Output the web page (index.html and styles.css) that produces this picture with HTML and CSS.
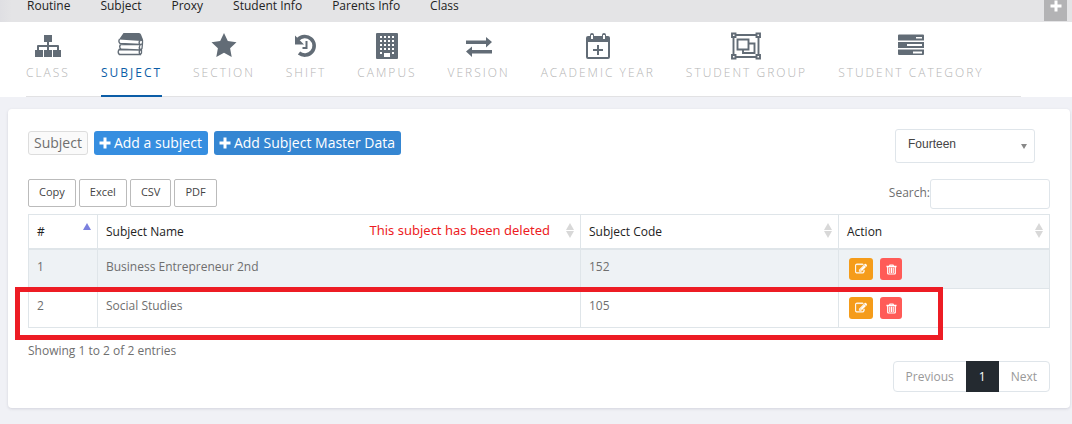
FILE: index.html
```html
<!DOCTYPE html>
<html lang="en">
<head>
<meta charset="utf-8">
<title>Subject</title>
<link rel="stylesheet" href="styles.css">
</head>
<body>
<svg class="sprite" aria-hidden="true">
  <symbol id="plus" viewBox="0 0 12 12"><path d="M4.500 .5h3v4h4v3h-4v4h-3v-4h-4v-3h4z"/></symbol>
  <symbol id="edit" viewBox="0 0 1792 1792"><path stroke="currentColor" stroke-width="60" d="M888 1184l116-116-152-152-116 116v56h96v96h56zm440-720q-16-16-33 1l-350 350q-17 17-1 33t33-1l350-350q17-17 1-33zm80 594v190q0 119-84.500 203.500t-203.500 84.500h-832q-119 0-203.500-84.500t-84.500-203.500v-832q0-119 84.500-203.500t203.500-84.500h832q63 0 117 25 15 7 18 23 3 17-9 29l-49 49q-14 14-32 8-23-6-45-6h-832q-66 0-113 47t-47 113v832q0 66 47 113t113 47h832q66 0 113-47t47-113v-126q0-13 9-22l64-64q15-15 35-7t20 29zm-96-738l288 288-672 672h-288v-288zm444 132l-92 92-288-288 92-92q28-28 68-28t68 28l152 152q28 28 28 68t-28 68z"/></symbol>
  <symbol id="trash" viewBox="0 0 12 12"><path fill-rule="evenodd" d="M4 .5h4l.8 1.500H11.500v1.500h-.7V10q0 1.500-1.300 1.500H2.500Q1.200 11.500 1.200 10V3.500H.5V2h2.700zm.9 1L4.700 2h2.600l-.2-.5zM2.500 3.500v6.300q0 .5.500.5h6q.5 0 .5-.5V3.500zM3.500 4h1.200v5.700H3.500zm1.900 0h1.200v5.700H5.400zm1.900 0h1.200v5.700H7.300z"/></symbol>
</svg>

<header class="topbar">
  <nav class="topnav">
    <a href="#">Routine</a><a href="#">Subject</a><a href="#">Proxy</a><a href="#">Student Info</a><a href="#">Parents Info</a><a href="#">Class</a>
  </nav>
  <button class="expand" type="button" aria-label="Add"><svg viewBox="0 0 12 12"><use href="#plus"/></svg></button>
</header>

<div class="tabs-area">
  <nav class="tabs">
    <a class="tab" href="#"><svg viewBox="0 0 30 28"><path d="M11 3h8v7h-3v3h9q1 0 1 1v4h2v7h-8v-7h4v-3h-8v3h3v7h-8v-7h3v-3H6v3h4v7H2v-7h2v-4q0-1 1-1h9v-3h-3z"/></svg><span>CLASS</span></a>
    <a class="tab active" href="#"><svg viewBox="0 0 30 28"><path d="M7.500 1h15.500q1.500 0 2 1.500l2 5q.5 1.500-1.500 1.500L3 7.500z"/><path class="line" d="M26.500 8v3.500l-2 1.200M26.500 11.500l-.5 5-2 1.500M25.500 17v4l-1.500 2M3.500 7q-1.500 2.500.5 4.500l20 1q-1.800-2 0-4M24 12.700L4.500 12.500q-1.800 2.500.3 4.700L24 18q-1.500-2.500 0-5M24 18l-21-.5q-1.800 2.700.3 5H24q-1.600-2.300 0-4.500"/></svg><span>SUBJECT</span></a>
    <a class="tab" href="#"><svg viewBox="0 0 30 28"><path d="M15 1l3.800 8 8.700 1.200-6.400 6 1.600 8.800-7.700-4.200L7.300 25l1.600-8.800-6.400-6L11.200 9z"/></svg><span>SECTION</span></a>
    <a class="tab" href="#"><svg viewBox="0 0 30 28"><path class="ring" d="M7 7.500A9.300 9.300 0 1 1 8 21"/><path d="M4 3.500v9h9zM14.500 9h2v8h-5v-2h3z"/></svg><span>SHIFT</span></a>
    <a class="tab" href="#"><svg viewBox="0 0 30 28"><path fill-rule="evenodd" d="M5 1h20q1 0 1 1v24q0 1-1 1H5q-1 0-1-1V2q0-1 1-1zM8 4v2h2V4zm4 0v2h2V4zm4 0v2h2V4zm4 0v2h2V4zM8 8v2h2V8zm4 0v2h2V8zm4 0v2h2V8zm4 0v2h2V8zM8 12v2h2v-2zm4 0v2h2v-2zm4 0v2h2v-2zm4 0v2h2v-2zM8 16v2h2v-2zm4 0v2h2v-2zm4 0v2h2v-2zm4 0v2h2v-2zM8 20v2h2v-2zm12 0v2h2v-2zM12 21v4h6v-4z"/></svg><span>CAMPUS</span></a>
    <a class="tab" href="#"><svg viewBox="0 0 30 28"><path d="M2 8.500h20V5l6 5-6 5.500V12H2zM28 21.500H8V25l-6-5.500 6-5V18h20z"/></svg><span>VERSION</span></a>
    <a class="tab" href="#"><svg viewBox="0 0 30 28"><path fill-rule="evenodd" d="M5 4h2V3q0-2 2-2t2 2v1h8V3q0-2 2-2t2 2v1h2q2 0 2 2v19q0 2-2 2H5q-2 0-2-2V6q0-2 2-2zm3-1v4h2V3zm12 0v4h2V3zM5 10v15h20V10zM14 13h2v4h4v2h-4v4h-2v-4h-4v-2h4z"/></svg><span>ACADEMIC YEAR</span></a>
    <a class="tab" href="#"><svg viewBox="0 0 30 28"><path class="group" d="M5 3h20M5 25h20M2.500 5v18M27.500 5v18M1 1.500h3.500V5H1zM25.500 1.500H29V5h-3.500zM1 23h3.500v3.500H1zM25.500 23H29v3.500h-3.500zM6.500 7.500h11v10h-11zM18 11.500h5.500v9.500H12v-3"/></svg><span>STUDENT GROUP</span></a>
    <a class="tab" href="#"><svg viewBox="0 0 30 28"><path fill-rule="evenodd" d="M3 2.500h24q1 0 1 1V8.500H2V3.500q0-1 1-1zM20 5v1.500h6V5zM2 10h26v6H2zM11 12v2h15v-2zM2 17.500h26V22q0 1-1 1H3q-1 0-1-1zM17 19.500v2h9v-2z"/></svg><span>STUDENT CATEGORY</span></a>
  </nav>
</div>

<main class="card">
  <div class="toolbar">
    <div class="actions">
      <span class="tag">Subject</span>
      <button class="btn add" type="button"><svg viewBox="0 0 12 12"><use href="#plus"/></svg>Add a subject</button>
      <button class="btn master" type="button"><svg viewBox="0 0 12 12"><use href="#plus"/></svg>Add Subject Master Data</button>
    </div>
    <div class="class-select"><select aria-label="Class"><option>Fourteen</option></select></div>
  </div>

  <div class="controls">
    <div class="exports">
      <button type="button">Copy</button><button type="button">Excel</button><button type="button">CSV</button><button type="button">PDF</button>
    </div>
    <div class="search"><label for="search">Search:</label><input id="search" type="text"></div>
  </div>

  <div class="table-wrap">
    <table>
      <colgroup><col class="c-num"><col class="c-name"><col class="c-code"><col class="c-action"></colgroup>
      <thead>
        <tr>
          <th><div class="head"><span>#</span><i class="sort up"></i></div></th>
          <th><div class="head"><span>Subject Name</span><em class="note">This subject has been deleted</em><i class="sort"></i></div></th>
          <th><div class="head"><span>Subject Code</span><i class="sort"></i></div></th>
          <th><div class="head"><span>Action</span><i class="sort"></i></div></th>
        </tr>
      </thead>
      <tbody>
        <tr><td>1</td><td>Business Entrepreneur 2nd</td><td>152</td><td><div class="row-actions"><button class="edit" type="button" aria-label="Edit"><svg viewBox="0 0 1792 1792"><use href="#edit"/></svg></button><button class="delete" type="button" aria-label="Delete"><svg viewBox="0 0 12 12"><use href="#trash"/></svg></button></div></td></tr>
        <tr><td>2</td><td>Social Studies</td><td>105</td><td><div class="row-actions"><button class="edit" type="button" aria-label="Edit"><svg viewBox="0 0 1792 1792"><use href="#edit"/></svg></button><button class="delete" type="button" aria-label="Delete"><svg viewBox="0 0 12 12"><use href="#trash"/></svg></button></div></td></tr>
      </tbody>
    </table>
    <div class="highlight"></div>
  </div>

  <p class="info">Showing 1 to 2 of 2 entries</p>
  <nav class="pager" aria-label="Pages"><a href="#">Previous</a><a class="current" href="#">1</a><a href="#">Next</a></nav>
</main>
</body>
</html>
```

FILE: styles.css
```css
* { box-sizing: border-box; }

body {
  margin: 0;
  background: #f0f1f6;
  color: #6f6f6f;
  font: 12px/18px "Open Sans", sans-serif;
}

a { color: inherit; text-decoration: none; }
button { font: inherit; cursor: pointer; }
svg { fill: currentColor; }
.sprite { position: absolute; width: 0; height: 0; }

/* Top bar */
.topbar {
  display: flex;
  justify-content: space-between;
  align-items: flex-start;
  height: 22px;
  padding: 0 5px 0 27px;
  background: linear-gradient(90deg, #dfdfe3, #e4e4e6 12px);
}
.topnav { display: flex; gap: 30px; line-height: 12px; color: #222; white-space: nowrap; }
.expand {
  display: flex;
  justify-content: center;
  width: 23px;
  height: 21px;
  padding: 0;
  border: 0;
  background: #b3b3b5;
  color: #fff;
}
.expand svg { width: 12px; height: 12px; }

/* Section tabs */
.tabs-area { padding: 0 51px 0 26px; background: #fff; }
.tabs { display: flex; gap: 31px; border-bottom: 1px solid #e2e2e4; }
.tab {
  display: flex;
  flex-direction: column;
  align-items: center;
  gap: 4px;
  height: 75px;
  margin-bottom: -1px;
  padding-top: 10px;
  border-bottom: 2px solid transparent;
  color: #b4b4b4;
  font-weight: 300;
  letter-spacing: 2px;
  white-space: nowrap;
}
.tab svg { width: 30px; height: 28px; color: #626c76; }
.tab.active { color: #0b5da7; font-weight: 400; border-color: #0b5da7; }
.line, .ring, .group { fill: none; stroke: currentColor; }
.line { stroke-width: 1.3; }
.ring { stroke-width: 3.6; }
.group { stroke-width: 1.9; }

/* Card */
.card {
  margin: 12px 2px 16px 8px;
  padding: 20px 20px 16px;
  border-radius: 4px;
  background: #fff;
  box-shadow: 0 1px 3px rgba(60, 60, 90, .16);
}

.toolbar { display: flex; justify-content: space-between; padding-right: 15px; }
.actions { display: flex; gap: 6px; padding-top: 2px; font-size: 14px; line-height: 22px; }
.tag { height: 24px; padding: 0 5px; border: 1px solid #ddd; border-radius: 3px; background: #fafafa; }
.btn {
  display: flex;
  align-items: center;
  gap: 3px;
  height: 24px;
  padding: 0 6px 0 5px;
  border: 0;
  border-radius: 3px;
  color: #fff;
}
.btn svg { width: 12px; height: 12px; }
.add { background: #368ee0; }
.master { background: #3586d2; }

.class-select { position: relative; width: 140px; }
.class-select select {
  width: 100%;
  height: 34px;
  padding: 0 12px 4px;
  appearance: none;
  border: 1px solid #dfe5ea;
  border-radius: 3px;
  background: #fff;
  color: #444;
  font: 12px "Liberation Sans", sans-serif;
}
.class-select::after {
  content: "";
  position: absolute;
  top: 15px;
  right: 8px;
  border: solid transparent;
  border-width: 5px 3px 0;
  border-top-color: #888;
}

.controls { display: flex; justify-content: space-between; margin-top: 16px; height: 30px; }
.exports { display: flex; gap: 3px; }
.exports button {
  height: 28px;
  padding: 0 10px 2px;
  border: 1px solid #bbb;
  border-radius: 2px;
  background: #fff;
  color: #444;
  font-size: 11px;
}
.search { display: flex; align-items: center; }
.search label { padding-bottom: 2px; }
.search input { width: 120px; height: 30px; border: 1px solid #dfe5ea; border-radius: 3px; padding: 0 8px; font: inherit; }

/* Table */
.table-wrap { position: relative; margin-top: 5px; }
table { width: 100%; table-layout: fixed; border-collapse: collapse; }
.c-num { width: 69px; }
.c-code { width: 258px; }
.c-action { width: 211px; }
th, td { border: 1px solid #dfe5e9; text-align: left; vertical-align: top; padding: 8px; }
th { color: #222; font-weight: 400; border-bottom-width: 2px; padding: 8px 6px 7px 8px; }
td { height: 39px; }
tbody tr:first-child { background: #eef2f5; }
.head { display: flex; align-items: center; }
.head > span { flex: 1; }
.note {
  margin-right: 16px;
  padding-bottom: 3px;
  color: #ed1c24;
  font: 13px/15px "Noto Sans", sans-serif;
}
.sort { display: flex; flex-direction: column; gap: 1px; width: 8px; height: 18px; }
.sort::before, .sort::after { content: ""; border: 4px solid transparent; border-top-width: 0; border-bottom: 7px solid #d8d8d8; }
.sort::after { border-top: 7px solid #d8d8d8; border-bottom-width: 0; }
.sort.up::before { border-bottom-color: #7b80de; }
.sort.up::after { visibility: hidden; }
.row-actions { display: flex; gap: 7px; padding-left: 2px; }
.row-actions button {
  display: grid;
  place-items: center;
  width: 24px;
  height: 22px;
  padding: 0;
  border: 0;
  border-radius: 3px;
  color: #fff;
}
.row-actions svg { width: 12px; height: 12px; }
.row-actions .edit { background: #f59c1a; }
.row-actions .delete { width: 22px; background: #ff5b57; }
.row-actions .delete svg { width: 11px; height: 11px; }

.highlight {
  position: absolute;
  bottom: -12px;
  left: -13px;
  right: 107px;
  height: 53px;
  border: 5px solid #ed1c24;
  pointer-events: none;
}

.info { margin: 14px 0 1px; }
.pager { display: flex; width: fit-content; margin-left: auto; border: 1px solid #dfe5ea; border-radius: 4px; color: #999; }
.pager a { padding: 6px 12px 5px; }
.pager .current { margin: -1px 0; padding: 7px 13px 6px; background: #242a30; color: #fff; }
```
